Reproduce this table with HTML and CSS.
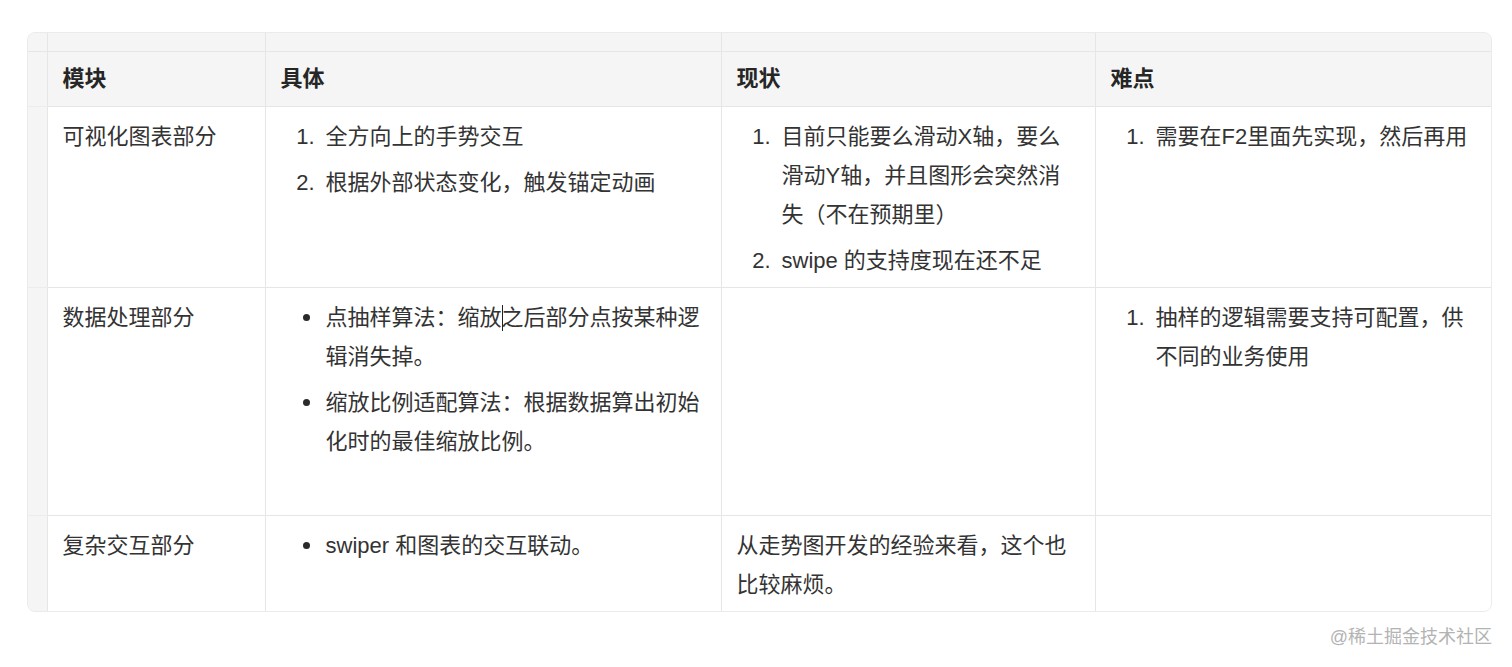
FILE: index.html
```html
<!DOCTYPE html>
<html lang="zh-CN">
<head>
<meta charset="utf-8">
<title>表格</title>
<link rel="stylesheet" href="styles.css">
</head>
<body>
<div class="sheet">
  <table class="grid">
    <colgroup>
      <col class="c-handle">
      <col class="c-1">
      <col class="c-2">
      <col class="c-3">
      <col class="c-4">
    </colgroup>
    <tr class="handle-row">
      <td class="corner"></td>
      <td class="hcell"></td>
      <td class="hcell"></td>
      <td class="hcell"></td>
      <td class="hcell"></td>
    </tr>
    <tr class="head">
      <td class="rh"></td>
      <th>模块</th>
      <th>具体</th>
      <th>现状</th>
      <th>难点</th>
    </tr>
    <tr>
      <td class="rh"></td>
      <td><p>可视化图表部分</p></td>
      <td>
        <ol>
          <li>全方向上的手势交互</li>
          <li>根据外部状态变化，触发锚定动画</li>
        </ol>
      </td>
      <td>
        <ol>
          <li>目前只能要么滑动X轴，要么滑动Y轴，并且图形会突然消失（不在预期里）</li>
          <li>swipe 的支持度现在还不足</li>
        </ol>
      </td>
      <td>
        <ol>
          <li>需要在F2里面先实现，然后再用</li>
        </ol>
      </td>
    </tr>
    <tr>
      <td class="rh"></td>
      <td><p>数据处理部分</p></td>
      <td>
        <ul>
          <li>点抽样算法：缩放之后部分点按某种逻辑消失掉。<span class="caret"></span></li>
          <li>缩放比例适配算法：根据数据算出初始化时的最佳缩放比例。</li>
        </ul>
        <div class="blank"></div>
      </td>
      <td></td>
      <td>
        <ol>
          <li>抽样的逻辑需要支持可配置，供不同的业务使用</li>
        </ol>
      </td>
    </tr>
    <tr>
      <td class="rh"></td>
      <td><p>复杂交互部分</p></td>
      <td>
        <ul>
          <li>swiper 和图表的交互联动。</li>
        </ul>
      </td>
      <td><p>从走势图开发的经验来看，这个也比较麻烦。</p></td>
      <td></td>
    </tr>
  </table>
</div>
<div class="watermark">@稀土掘金技术社区</div>
</body>
</html>
```

FILE: styles.css
```css
html, body {
  margin: 0;
  padding: 0;
  background: #ffffff;
}

body {
  font-family: "Liberation Sans", "Noto Sans CJK SC", sans-serif;
  color: #333333;
  font-size: 22px;
  line-height: 39px;
  padding: 32px 0 0 27px;
}

.sheet {
  width: 1463px;
  border: 1px solid #ebebeb;
  border-radius: 8px;
  overflow: hidden;
  background: #f5f5f5;
}

.grid {
  width: 1463px;
  table-layout: fixed;
  border-collapse: collapse;
}

.c-handle { width: 19px; }
.c-1 { width: 218px; }
.c-2 { width: 456px; }
.c-3 { width: 374px; }
.c-4 { width: 396px; }

.grid td,
.grid th {
  border: 1px solid #e6e6e6;
  vertical-align: top;
  padding: 10px 15px 7px;
  background: #ffffff;
  text-align: left;
}

.grid .handle-row td {
  height: 18px;
  padding: 0;
  background: #f5f5f5;
  border-top: none;
}

.grid .handle-row td.corner {
  border-left: none;
}

.grid td.rh {
  padding: 0;
  background: #f5f5f5;
  border-left: none;
  border-top-color: #ececec;
  border-bottom-color: #ececec;
}

.grid tr:last-child td {
  border-bottom: none;
}

.grid tr td:last-child,
.grid tr th:last-child {
  border-right: none;
}

.grid .head th {
  background: #f5f5f5;
  font-weight: bold;
  color: #262626;
  padding: 7px 15px 8px;
}

.grid p {
  margin: 0;
}

.grid ol,
.grid ul {
  margin: 0;
  padding-left: 45px;
}

.grid ol li::marker {
  content: counter(list-item) ".\2002";
}

.grid ul {
  list-style: none;
}

.grid ul li {
  position: relative;
}

.grid ul li::before {
  content: "";
  position: absolute;
  left: -23px;
  top: 16px;
  width: 7px;
  height: 7px;
  border-radius: 50%;
  background: #2a2a2a;
}

.grid li + li {
  margin-top: 7px;
}

.caret {
  position: absolute;
  left: 176px;
  top: 7px;
  width: 1.5px;
  height: 26px;
  background: #222222;
}

.blank {
  height: 47px;
}

.watermark {
  width: 1465px;
  text-align: right;
  font-size: 18px;
  line-height: 24px;
  color: #b3b3b3;
  margin-top: 13px;
}
```
